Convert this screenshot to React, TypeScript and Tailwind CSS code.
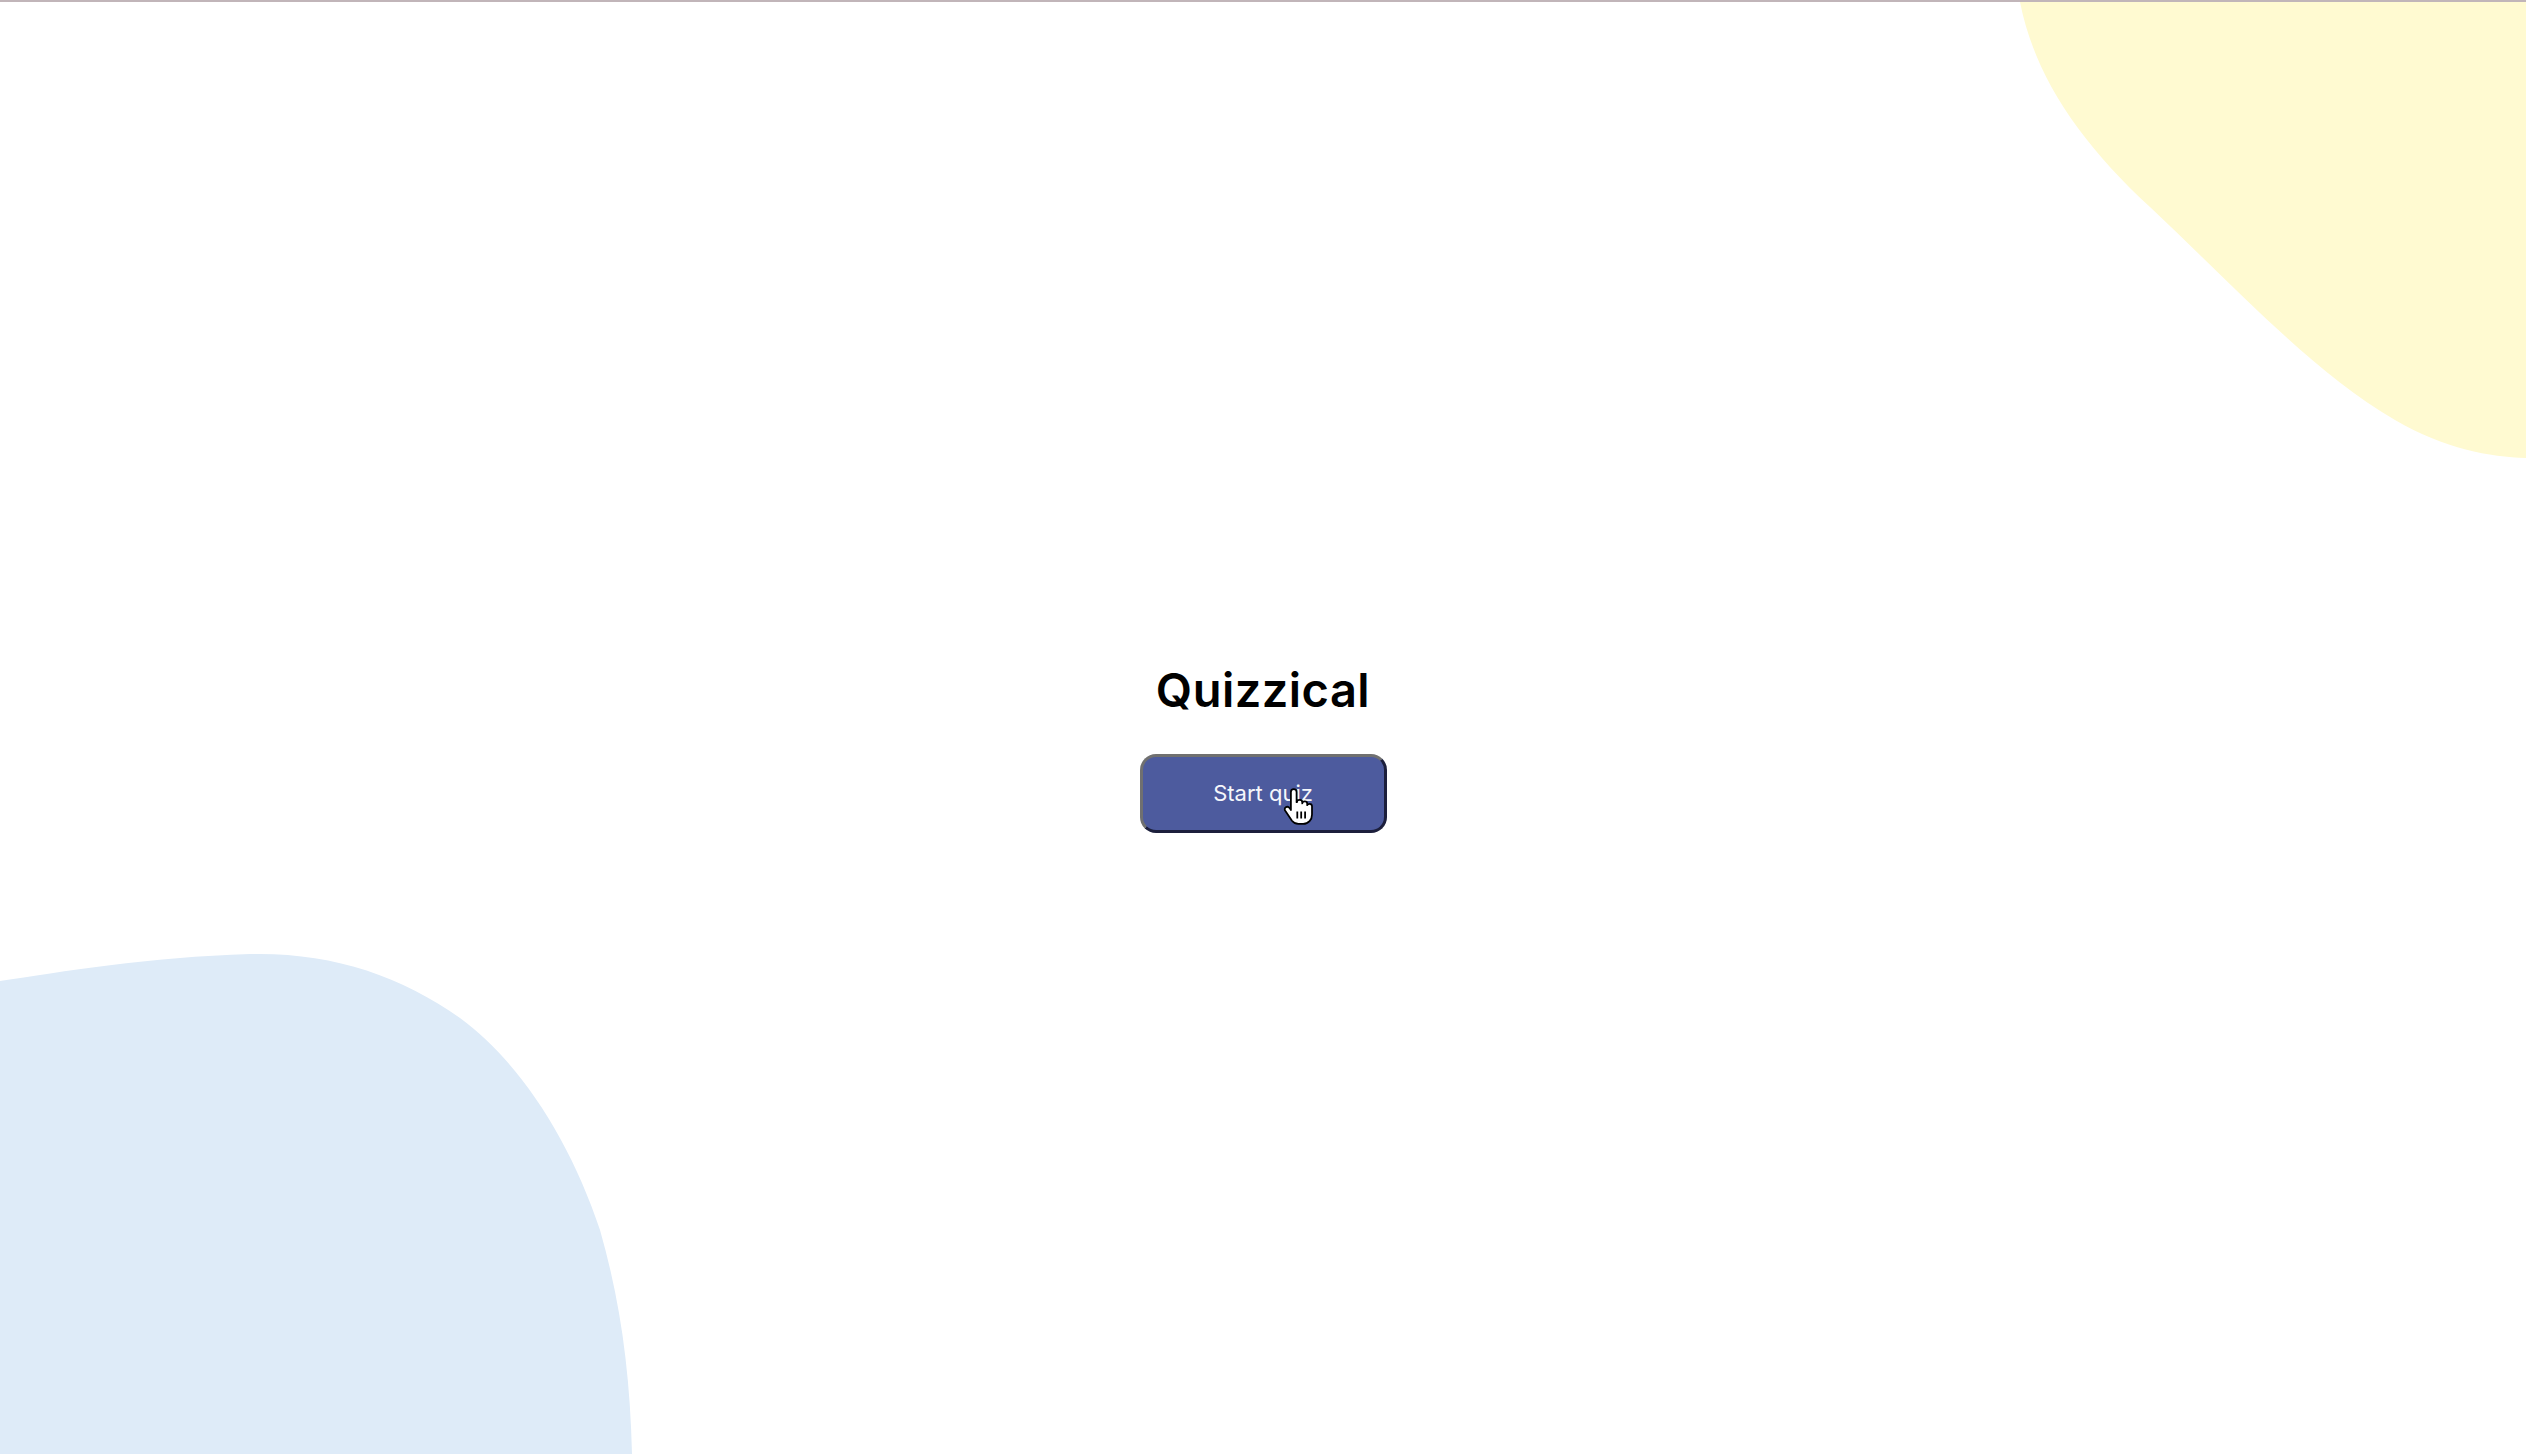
import React from "react"

function Blobs() {
  return (
    <svg
      className="absolute inset-0 h-full w-full pointer-events-none"
      viewBox="0 0 2526 1452"
      preserveAspectRatio="none"
    >
      {/* yellow blob, top right */}
      <path
        d="M2020 0 C2035 75 2080 140 2150 205 C2230 280 2310 368 2395 418 C2445 447 2490 455 2526 456 L2526 0 Z"
        fill="#FFFAD1"
      />
      {/* blue blob, bottom left */}
      <path
        d="M0 979 C60 970 150 955 250 952 C330 950 400 973 460 1016 C520 1060 570 1138 600 1228 C620 1298 630 1368 632 1452 L0 1452 Z"
        fill="#DEEBF8"
      />
    </svg>
  )
}

function HandCursor() {
  return (
    <svg
      className="absolute left-[142px] top-[34px] pointer-events-none"
      width="32"
      height="39"
      viewBox="0 0 18 22"
    >
      <path
        d="M5 2.2c0-.9.7-1.6 1.6-1.6s1.6.7 1.6 1.6V8h.2c0-.8.7-1.3 1.5-1.3s1.5.6 1.5 1.3v.7c.1-.7.7-1.1 1.4-1.1.8 0 1.4.6 1.4 1.3v.8c.2-.5.7-.8 1.300-.8.8 0 1.4.6 1.4 1.4v4.6c0 3-2 5.4-5 5.4H9.2c-1.6 0-2.7-.7-3.6-1.8L1.9 13c-.6-.7-.5-1.6.2-2.1.7-.5 1.6-.3 2.1.3L5 12.4V2.2z"
        fill="#ffffff"
        stroke="#000000"
        strokeWidth="1"
        strokeLinejoin="round"
      />
      <path d="M8.6 13.2v4M10.8 13.2v4M13 13.2v4" stroke="#000000" strokeWidth="1" />
    </svg>
  )
}

export default function App() {
  return (
    <div className="flex flex-col w-full h-[1454px] bg-white overflow-hidden font-['Inter',sans-serif]">
      <div className="h-[2px] w-full bg-[#c1b5b9]" />
      <main className="relative flex-1 flex flex-col items-center justify-center pt-[37px]">
        <Blobs />
        <h1 className="relative text-[47px] leading-[60px] font-semibold text-black tracking-[0.01em]">
          Quizzical
        </h1>
        <div className="relative mt-[34px]">
          <button className="w-[247px] h-[79px] rounded-[16px] border-[3px] border-t-[#707070] border-l-[#707070] border-b-[#1c1f3c] border-r-[#1c1f3c] bg-[#4D5B9E] text-[22px] text-[#F5F7FB]">
            Start quiz
          </button>
          <HandCursor />
        </div>
      </main>
    </div>
  )
}
